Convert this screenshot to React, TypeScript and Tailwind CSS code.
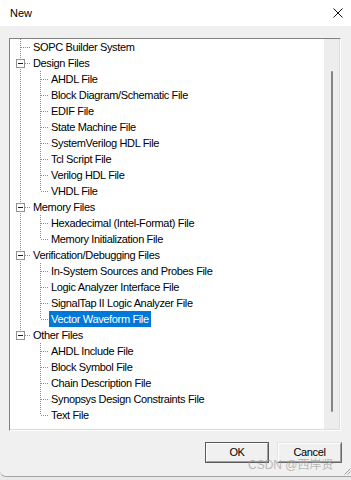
import React from 'react';

type Node = { label: string; children?: string[] };

const tree: Node[] = [
  { label: 'SOPC Builder System' },
  {
    label: 'Design Files',
    children: [
      'AHDL File',
      'Block Diagram/Schematic File',
      'EDIF File',
      'State Machine File',
      'SystemVerilog HDL File',
      'Tcl Script File',
      'Verilog HDL File',
      'VHDL File',
    ],
  },
  { label: 'Memory Files', children: ['Hexadecimal (Intel-Format) File', 'Memory Initialization File'] },
  {
    label: 'Verification/Debugging Files',
    children: [
      'In-System Sources and Probes File',
      'Logic Analyzer Interface File',
      'SignalTap II Logic Analyzer File',
      'Vector Waveform File',
    ],
  },
  {
    label: 'Other Files',
    children: [
      'AHDL Include File',
      'Block Symbol File',
      'Chain Description File',
      'Synopsys Design Constraints File',
      'Text File',
    ],
  },
];

const DOT = '#8c8c8c';
const SELECTED = 'Vector Waveform File';

function RootLines({ last, box }: { last: boolean; box: boolean }) {
  return (
    <svg width="21" height="16" className="shrink-0 block" shapeRendering="crispEdges">
      <line x1="10.5" y1="0" x2="10.5" y2={last ? 8 : 16} stroke={DOT} strokeDasharray="1 1" />
      <line x1={box ? 15 : 11} y1="8.5" x2="20" y2="8.5" stroke={DOT} strokeDasharray="1 1" />
      {box && (
        <>
          <rect x="6.5" y="4.5" width="8" height="8" fill="#ffffff" stroke="#919191" />
          <line x1="8" y1="8.5" x2="13" y2="8.5" stroke="#1a1a1a" />
        </>
      )}
    </svg>
  );
}

function ChildLines({ rootCont, last }: { rootCont: boolean; last: boolean }) {
  return (
    <svg width="39" height="16" className="shrink-0 block" shapeRendering="crispEdges">
      {rootCont && <line x1="10.5" y1="0" x2="10.5" y2="16" stroke={DOT} strokeDasharray="1 1" />}
      <line x1="30.5" y1="0" x2="30.5" y2={last ? 8 : 16} stroke={DOT} strokeDasharray="1 1" />
      <line x1="31" y1="8.5" x2="39" y2="8.5" stroke={DOT} strokeDasharray="1 1" />
    </svg>
  );
}

function Label({ text }: { text: string }) {
  const sel = text === SELECTED;
  return (
    <span
      className={
        sel
          ? 'h-[16px] leading-[16px] px-[2px] bg-[#0078d7] text-white whitespace-nowrap'
          : 'h-[16px] leading-[16px] px-[2px] text-black whitespace-nowrap'
      }
    >
      {text}
    </span>
  );
}

export default function App() {
  const rows: React.ReactNode[] = [];
  tree.forEach((node, gi) => {
    const lastTop = gi === tree.length - 1;
    rows.push(
      <div key={node.label} className="flex h-[16px] items-start">
        <RootLines last={lastTop} box={!!node.children} />
        <Label text={node.label} />
      </div>
    );
    node.children?.forEach((c, ci) => {
      rows.push(
        <div key={c} className="flex h-[16px] items-start">
          <ChildLines rootCont={!lastTop} last={ci === node.children!.length - 1} />
          <Label text={c} />
        </div>
      );
    });
  });

  return (
    <div className="w-[351px] h-[480px] bg-[#e9e9e9] overflow-hidden font-['Liberation_Sans',Arial,sans-serif] text-[11px] tracking-[-0.35px]">
      <div className="relative h-[477px] bg-[#f0f0f0] flex flex-col border-b border-[#a3a3a3] rounded-bl-[6px]">
        {/* Title bar */}
        <div className="h-[26px] bg-white flex items-center justify-between pl-[10px] pr-[8px]">
          <span className="text-[11px] tracking-[0px] text-black">New</span>
          <svg width="10" height="10" className="block">
            <line x1="0.5" y1="0.5" x2="9.5" y2="9.5" stroke="#111" strokeWidth="1" />
            <line x1="9.5" y1="0.5" x2="0.5" y2="9.5" stroke="#111" strokeWidth="1" />
          </svg>
        </div>

        {/* Tree box */}
        <div className="mt-[12px] ml-[9px] w-[332px] h-[393px] border-t border-l border-[#828282] border-r border-b border-r-white border-b-white flex">
          <div className="flex-1 flex border-r border-b border-[#dcdcdc] bg-white">
            <div className="flex-1 pl-0 flex flex-col">{rows}</div>
            <div className="w-[15px] bg-[#ededed] flex justify-center pt-[32px] pb-[17px]">
              <div className="w-[2px] h-full bg-[#858585] rounded-full ml-[1px]" />
            </div>
          </div>
        </div>

        {/* Buttons */}
        <div className="mt-[11px] flex justify-end gap-[8px] pr-[9px]">
          <button className="w-[64px] h-[21px] border border-[#5a5a5a] bg-[#f0f0f0] p-0 flex">
            <div className="flex-1 flex items-center justify-center border-t border-l border-white border-r border-b border-r-[#a0a0a0] border-b-[#a0a0a0] text-black">
              OK
            </div>
          </button>
          <button className="w-[65px] h-[21px] border-t border-l border-[#e3e3e3] border-r border-b border-r-[#696969] border-b-[#696969] bg-[#f0f0f0] p-0 flex">
            <div className="flex-1 flex items-center justify-center border-t border-l border-white border-r border-b border-r-[#a0a0a0] border-b-[#a0a0a0] text-black">
              Cancel
            </div>
          </button>
        </div>

        {/* Watermark */}
        <div className="absolute left-[248px] top-[457px] text-[12px] tracking-[0px] leading-[16px] text-[#9d9d9d]/70 font-['Liberation_Sans','Noto_Sans_CJK_SC',sans-serif] whitespace-nowrap pointer-events-none">
          CSDN @西岸贤
        </div>

        {/* Resize grip */}
        <svg width="9" height="9" className="absolute right-[0px] bottom-[1px] block">
          <line x1="8.5" y1="2.5" x2="2.5" y2="8.5" stroke="#a0a0a0" />
          <line x1="8.5" y1="5.5" x2="5.5" y2="8.5" stroke="#a0a0a0" />
        </svg>
      </div>
    </div>
  );
}
